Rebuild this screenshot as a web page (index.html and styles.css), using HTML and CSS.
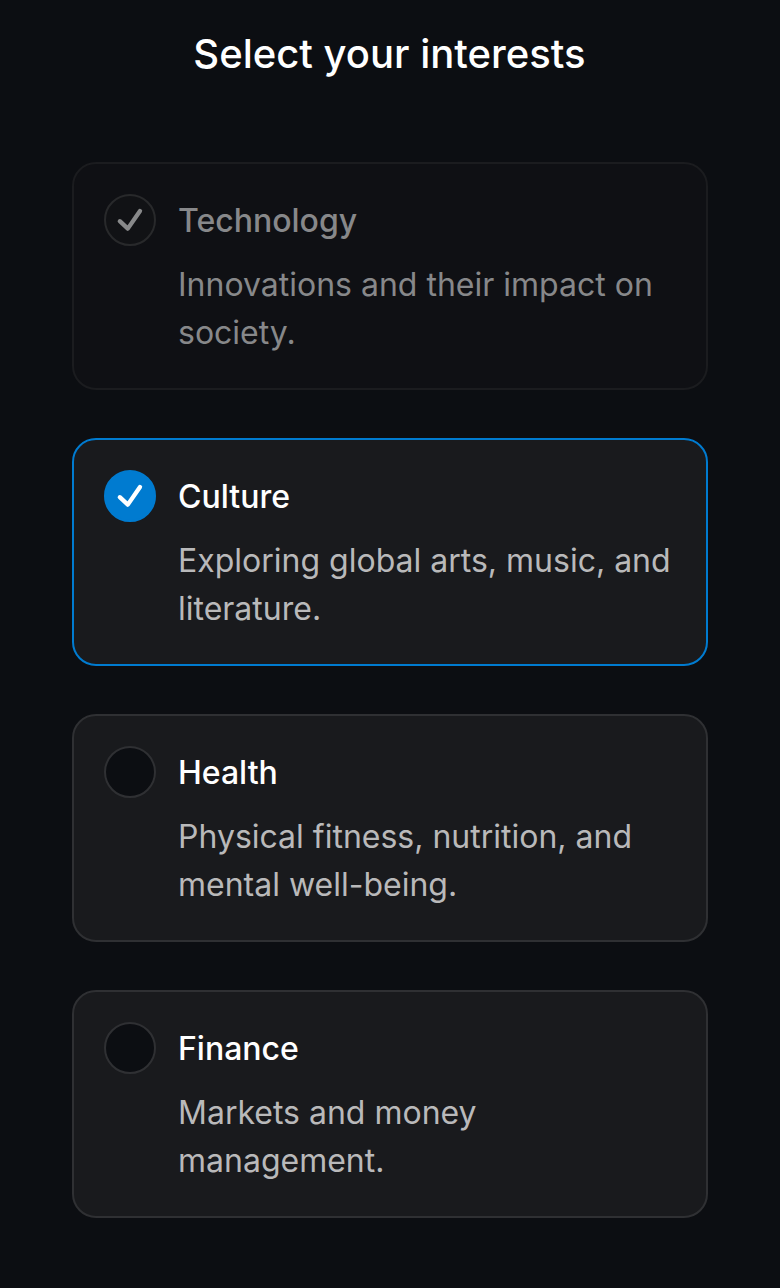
FILE: index.html
```html
<!DOCTYPE html>
<html lang="en">
<head>
<meta charset="utf-8">
<title>Select your interests</title>
<link rel="stylesheet" href="styles.css">
</head>
<body>
<main class="page">
  <h1 class="title">Select your interests</h1>
  <div class="cards">
    <div class="card card-disabled">
      <span class="check"><svg class="check-icon" viewBox="0 0 52 52"><path d="M15.8 27.2 23.8 34.6 36 17"/></svg></span>
      <div class="card-body">
        <h2 class="card-title">Technology</h2>
        <p class="card-text">Innovations and their impact on society.</p>
      </div>
    </div>
    <div class="card card-selected">
      <span class="check"><svg class="check-icon" viewBox="0 0 52 52"><path d="M15.8 27.2 23.8 34.6 36 17"/></svg></span>
      <div class="card-body">
        <h2 class="card-title">Culture</h2>
        <p class="card-text">Exploring global arts, music, and literature.</p>
      </div>
    </div>
    <div class="card">
      <span class="check"></span>
      <div class="card-body">
        <h2 class="card-title">Health</h2>
        <p class="card-text">Physical fitness, nutrition, and mental well-being.</p>
      </div>
    </div>
    <div class="card">
      <span class="check"></span>
      <div class="card-body">
        <h2 class="card-title">Finance</h2>
        <p class="card-text">Markets and money management.</p>
      </div>
    </div>
  </div>
</main>
</body>
</html>
```
FILE: styles.css
```css
* { box-sizing: border-box; }
body { margin: 0; background: #0c0e12; color: #fff; font-family: Inter, "Liberation Sans", sans-serif; }
.page { min-height: 1288px; padding: 30px 72px 70px; }
.title { margin: 0 0 84px; padding-right: 1px; font-size: 40px; line-height: 48px; font-weight: 500; text-align: center; }
.cards { display: flex; flex-direction: column; gap: 48px; }
.card { display: flex; gap: 22px; height: 228px; padding: 30px; border: 2px solid #2f3033; border-radius: 24px; background: #191a1d; }
.check { flex: none; width: 52px; height: 52px; border: 2px solid #2f3033; border-radius: 50%; background: #0c0e12; }
.check-icon { display: block; width: 52px; height: 52px; margin: -2px; fill: none; stroke: #fff; stroke-width: 4.3; stroke-linecap: round; stroke-linejoin: round; }
.card-title { margin: 3px 0 16px; font-size: 32px; line-height: 48px; font-weight: 500; }
.card-text { margin: 0; font-size: 32px; line-height: 48px; color: #b9b9ba; }
.card-selected { border-color: #007bd0; }
.card-selected .check { border-color: #007bd0; background: #007bd0; }
.card-disabled { border-color: #1b1c1f; background: #0f1014; }
.card-disabled .check { border-color: #28292b; background: #111215; }
.card-disabled .check-icon { stroke: #88898a; }
.card-disabled .card-title,
.card-disabled .card-text { color: #87888a; }
```
